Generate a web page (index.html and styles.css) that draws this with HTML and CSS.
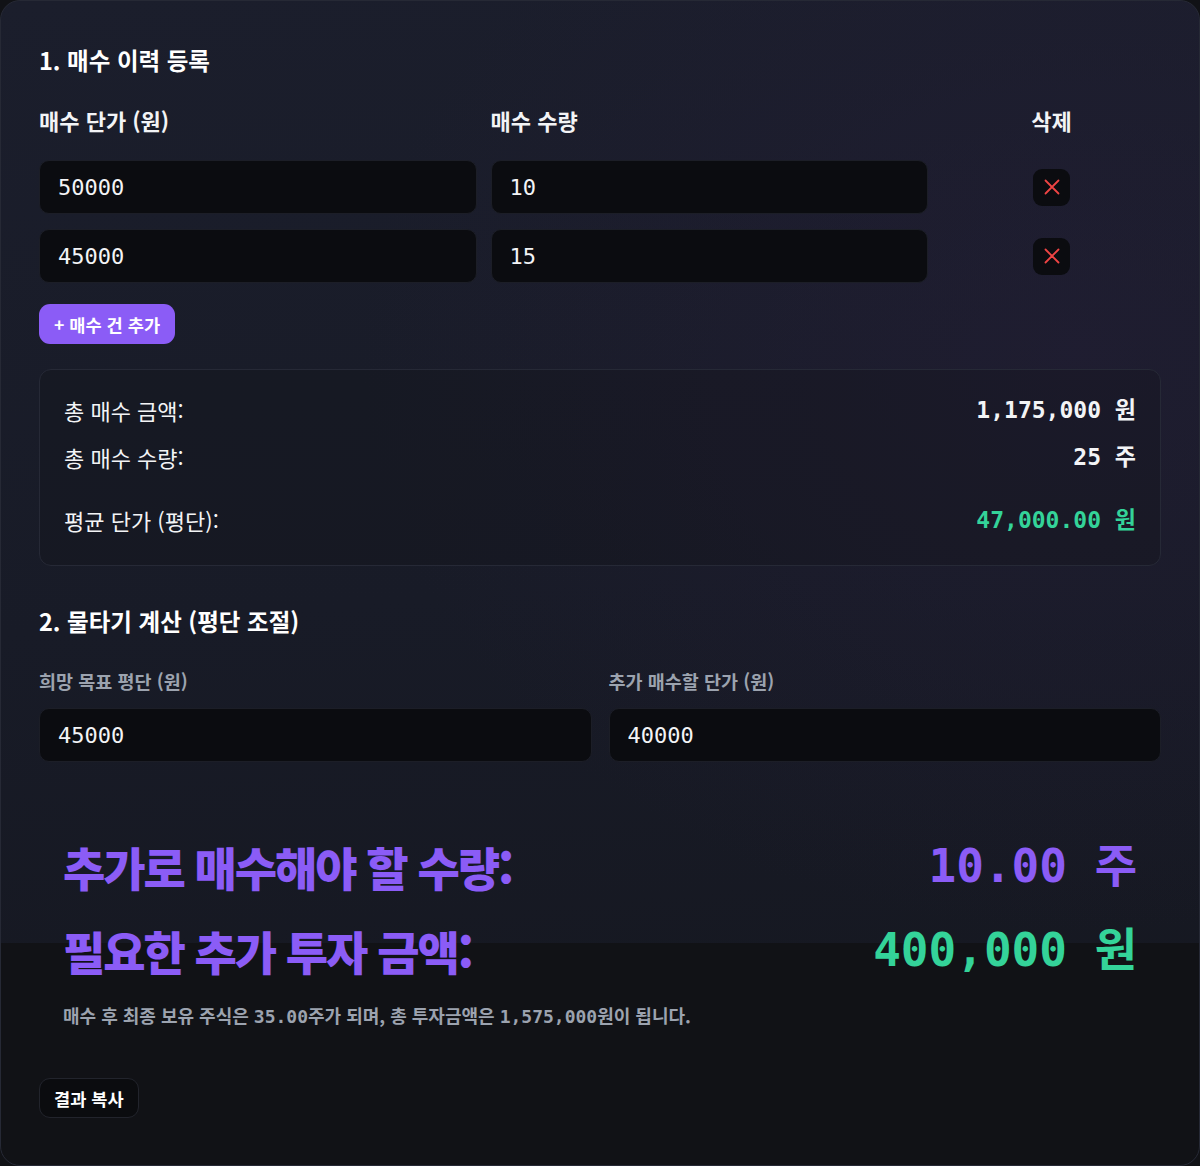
FILE: index.html
```html
<!DOCTYPE html>
<html lang="ko">
<head>
<meta charset="utf-8">
<title>평단 계산기</title>
<link rel="stylesheet" href="styles.css">
</head>
<body>
<main class="card">
  <section class="section">
    <h2 class="section-title">1. 매수 이력 등록</h2>
    <div class="buy-grid">
      <div class="col-head">매수 단가 (원)</div>
      <div class="col-head">매수 수량</div>
      <div class="col-head center">삭제</div>

      <input class="field mono" type="text" value="50000">
      <input class="field mono" type="text" value="10">
      <div class="del-cell"><button class="del-btn" aria-label="삭제"><svg viewBox="0 0 18 18" width="18" height="18"><path d="M2.5 2.5 L15.5 15.5 M15.5 2.5 L2.5 15.5" stroke="#ef4444" stroke-width="1.8" stroke-linecap="round" fill="none"/></svg></button></div>

      <input class="field mono" type="text" value="45000">
      <input class="field mono" type="text" value="15">
      <div class="del-cell"><button class="del-btn" aria-label="삭제"><svg viewBox="0 0 18 18" width="18" height="18"><path d="M2.5 2.5 L15.5 15.5 M15.5 2.5 L2.5 15.5" stroke="#ef4444" stroke-width="1.8" stroke-linecap="round" fill="none"/></svg></button></div>
    </div>
    <button class="add-btn">+ 매수 건 추가</button>

    <div class="summary">
      <div class="sum-row"><span>총 매수 금액:</span><span class="mono strong">1,175,000 원</span></div>
      <div class="sum-row"><span>총 매수 수량:</span><span class="mono strong">25 주</span></div>
      <div class="sum-row avg"><span>평균 단가 (평단):</span><span class="mono strong green">47,000.00 원</span></div>
    </div>
  </section>

  <section class="section second">
    <h2 class="section-title">2. 물타기 계산 (평단 조절)</h2>
    <div class="calc-grid">
      <label class="calc-field">
        <span class="calc-label">희망 목표 평단 (원)</span>
        <input class="field mono" type="text" value="45000">
      </label>
      <label class="calc-field">
        <span class="calc-label">추가 매수할 단가 (원)</span>
        <input class="field mono" type="text" value="40000">
      </label>
    </div>

    <div class="result">
      <div class="res-row purple"><span>추가로 매수해야 할 수량:</span><span class="mono">10.00 주</span></div>
      <div class="res-row"><span class="purple">필요한 추가 투자 금액:</span><span class="mono green">400,000 원</span></div>
      <p class="note">매수 후 최종 보유 주식은 <span class="mono">35.00</span>주가 되며, 총 투자금액은 <span class="mono">1,575,000</span>원이 됩니다.</p>
    </div>

    <button class="copy-btn">결과 복사</button>
  </section>
</main>
</body>
</html>
```
FILE: styles.css
```css
* { box-sizing: border-box; }

html, body {
  margin: 0;
  background: #111216;
}

body {
  font-family: "Noto Sans CJK KR", "Noto Sans", sans-serif;
  color: #f3f4f6;
}

.mono {
  font-family: "DejaVu Sans Mono", "Noto Sans CJK KR", monospace;
}

.card {
  min-height: 1166px;
  border: 1px solid #262935;
  border-radius: 20px;
  padding: 42px 38px 40px;
  background:
    linear-gradient(180deg, rgba(17,18,22,0) 0, rgba(17,18,22,0) 942px, #111216 942px),
    radial-gradient(ellipse 60% 50% at 90% 30%, rgba(38,30,58,0.45), rgba(38,30,58,0) 100%),
    linear-gradient(175deg, #1b1e2c 0%, #181b27 50%, #15171f 100%);
}

.section-title {
  margin: 0;
  font-size: 23.5px;
  line-height: 34px;
  font-weight: 700;
  color: #ffffff;
}

.buy-grid {
  display: grid;
  grid-template-columns: 2fr 2fr 1fr;
  column-gap: 14px;
  row-gap: 15px;
  margin-top: 28px;
  align-items: center;
}

.col-head {
  font-size: 22px;
  line-height: 30px;
  font-weight: 700;
  margin-bottom: 10px;
}

.col-head.center { text-align: center; }

.field {
  width: 100%;
  height: 54px;
  padding: 0 18px;
  border: 1px solid #1c1e27;
  border-radius: 10px;
  background: #0b0c10;
  color: #f3f4f6;
  font-size: 22px;
  font-family: "DejaVu Sans Mono", monospace;
  outline: none;
}

.del-cell {
  display: flex;
  justify-content: center;
}

.del-btn {
  width: 37px;
  height: 37px;
  padding: 0;
  border: none;
  border-radius: 9px;
  background: #0b0c10;
  display: flex;
  align-items: center;
  justify-content: center;
}

.add-btn {
  margin-top: 21px;
  height: 40px;
  padding: 0 15px;
  border: none;
  border-radius: 11px;
  background: #8b5cf6;
  color: #ffffff;
  font-family: inherit;
  font-size: 17.6px;
  font-weight: 700;
}

.summary {
  margin-top: 25px;
  border: 1px solid #262936;
  border-radius: 12px;
  padding: 17px 24px 21px;
  background: rgba(14, 15, 21, 0.25);
}

.sum-row {
  display: flex;
  justify-content: space-between;
  align-items: center;
  padding: 7px 0;
  font-size: 22px;
  line-height: 33px;
}

.sum-row .mono { font-size: 23px; }

.sum-row.avg { margin-top: 16px; }

.strong { font-weight: 700; }

.green { color: #34d399; }

.purple { color: #8b5cf6; }

.second { margin-top: 38px; }

.calc-grid {
  display: grid;
  grid-template-columns: 1fr 1fr;
  column-gap: 17px;
  margin-top: 30px;
}

.calc-field {
  display: flex;
  flex-direction: column;
  gap: 13px;
}

.calc-label {
  font-size: 18.5px;
  line-height: 27px;
  font-weight: 700;
  color: #9ca3af;
}

.result {
  margin-top: 62px;
  padding: 0 24px;
}

.res-row {
  display: flex;
  justify-content: space-between;
  align-items: center;
  font-size: 46px;
  line-height: 54px;
  font-weight: 900;
  letter-spacing: -0.045em;
  padding: 15px 0;
}

.res-row .mono { letter-spacing: 0; font-weight: 700; }

.note {
  margin: 10px 0 0;
  font-size: 18px;
  line-height: 26px;
  font-weight: 700;
  color: #9ca3af;
}

.copy-btn {
  margin-top: 48px;
  height: 40px;
  padding: 0 14px;
  border: 1px solid #22242c;
  border-radius: 11px;
  background: #0b0c0f;
  color: #ffffff;
  font-family: inherit;
  font-size: 17.6px;
  font-weight: 700;
}
```
